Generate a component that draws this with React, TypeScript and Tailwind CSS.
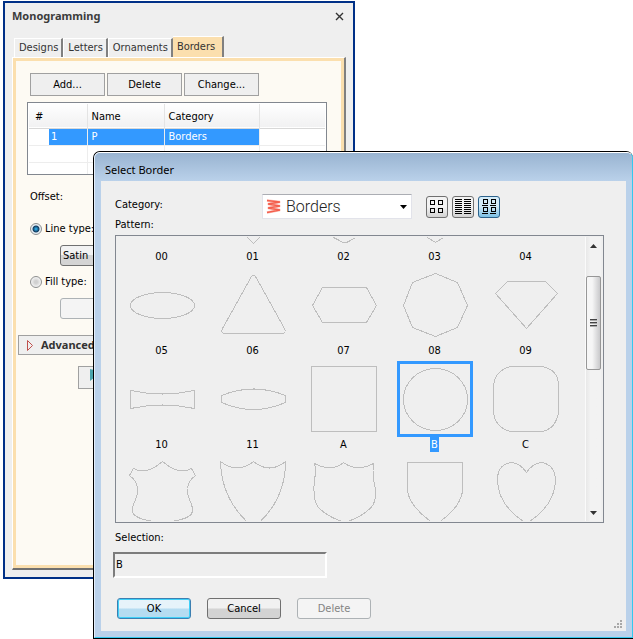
import { useState } from 'react'

type Pattern = { name: string; path: string; label?: string }

const PATTERNS: Pattern[] = [
  { name: '00', label: '00', path: '' },
  { name: '01', label: '01', path: 'M38 8 L68 39 L38 70 L8 39 Z' },
  { name: '02', label: '02', path: 'M27 64 L33 67 L36 69 L40 69 L44 67 L49 64' },
  { name: '03', label: '03', path: 'M30 64 L38 69 L46 64' },
  { name: '04', label: '04', path: '' },
  { name: '05', label: '05', path: 'M6 38 A32 13 0 1 1 70 38 A32 13 0 1 1 6 38 Z' },
  { name: '06', label: '06', path: 'M36 9 Q38 7 40 9 L69 61 Q71 66 66 66 L10 66 Q5 66 7 61 Z' },
  { name: '07', label: '07', path: 'M6 38 L16 20 L60 20 L70 38 L60 55 L16 55 Z' },
  { name: '08', label: '08', path: 'M38 6 L60 15 L70 38 L60 60 L38 69 L15 60 L6 38 L15 15 Z' },
  { name: '09', label: '09', path: 'M19 14 L57 14 L69 26 L38 61 L7 26 Z' },
  { name: '10', label: '10', path: 'M6 29 Q38 36 70 29 L70 47 Q38 40 6 47 Z' },
  { name: '11', label: '11', path: 'M6 34 Q38 21 70 34 L70 41 Q38 55 6 41 Z' },
  { name: 'A', label: 'A', path: 'M5 5 H70 V70 H5 Z' },
  { name: 'B', label: 'B', path: 'M6 38 A32 31 0 1 1 70 38 A32 31 0 1 1 6 38 Z' },
  { name: 'C', label: 'C', path: 'M23 5 H53 Q70 8 70 24 V51 Q67 68 53 70 H23 Q7 67 5 51 V24 Q7 8 23 5 Z' },
  {
    name: 'Hide',
    path: 'M38 6 Q27 15 21 15 Q14 16 9 13 L5 20 Q12 25 13 33 Q14 38 9 49 Q6 58 12 61 Q18 65 38 67 Q58 65 64 61 Q70 58 67 49 Q62 38 63 33 Q64 25 71 20 L67 13 Q62 16 55 15 Q49 15 38 6 Z',
  },
  { name: 'Pointed shield', path: 'M5 6 Q22 19 38 6 Q54 19 70 6 Q70 46 38 72 Q6 46 5 6 Z' },
  {
    name: 'Round shield',
    path: 'M8 8 Q25 17 37 7 Q50 17 67 8 Q66 15 67 24 Q73 48 61 55 Q54 62 38 67 Q20 61 11 51 Q6 42 8 24 Q10 15 8 8 Z',
  },
  { name: 'Flat shield', path: 'M10 7 H65 V36 Q62 54 38 69 Q14 54 10 36 Z' },
  { name: 'Heart', path: 'M38 17 Q32 8 23 7 Q9 9 9 24 Q9 50 38 68 Q67 50 67 24 Q66 9 53 7 Q44 8 38 17 Z' },
]

const TABS = ['Designs', 'Letters', 'Ornaments', 'Borders']

function FlatButton({ children }: { children: string }) {
  return (
    <button type="button" className="h-[23px] w-[75px] border border-[#a0a0a0] bg-[#efefef] pt-[2px] text-center">
      {children}
    </button>
  )
}

function Radio({ id, label, checked, onChange }: { id: string; label: string; checked: boolean; onChange: () => void }) {
  return (
    <div className="ml-[14px] flex h-4 items-center gap-[3px]">
      <input
        id={id}
        type="radio"
        name="border-type"
        checked={checked}
        onChange={onChange}
        className="h-3 w-3 appearance-none rounded-full border border-[#8e8f8f] bg-[radial-gradient(circle,#d0d0d0_20%,#f4f4f4_70%)] checked:bg-[radial-gradient(circle,#2a9fd8_10%,#123a5e_42%,#e6eef4_56%)]"
      />
      <label htmlFor={id}>{label}</label>
    </div>
  )
}

function MonogrammingWindow() {
  const [tab, setTab] = useState('Borders')
  const [kind, setKind] = useState('line')

  return (
    <section className="ml-[3px] w-full max-w-[352px] border-2 border-[#003087] bg-[#efefef] pr-[7px] pb-[7px] pl-[7px]">
      <header className="flex h-[33px] items-center justify-between pr-[2px] pb-[7px]">
        <h1 className="font-['Noto_Sans',sans-serif] text-[11px] font-bold text-[#3c3c3c]">Monogramming</h1>
        <button type="button" aria-label="Close">
          <svg width="9" height="9" viewBox="0 0 9 9" stroke="#333" strokeWidth="1.4">
            <path d="M1 1 L8 8 M8 1 L1 8" />
          </svg>
        </button>
      </header>

      <nav className="flex items-end pl-[2px] text-[#333]">
        {TABS.map((name) => (
          <button
            key={name}
            type="button"
            onClick={() => setTab(name)}
            className={
              tab === name
                ? 'h-[21px] border-t border-r-2 border-t-white border-r-[#808080] bg-[#fbdfae] pr-[7px] pl-1'
                : 'h-[19px] border-t border-r-2 border-l border-t-white border-r-[#808080] border-l-white pr-[3px] pl-1'
            }
          >
            {name}
          </button>
        ))}
      </nav>

      <div className="border-t border-r-2 border-b-2 border-l border-t-white border-r-[#808080] border-b-[#707070] border-l-white">
        <div className="border-[3px] border-[#fbdfae] bg-[#fdfaf3] pt-3 pb-44">
          <div className="ml-[14px] flex gap-[2px]">
            <FlatButton>Add...</FlatButton>
            <FlatButton>Delete</FlatButton>
            <FlatButton>Change...</FlatButton>
          </div>

          <div className="mt-[6px] mr-[14px] ml-[11px] h-[73px] overflow-hidden border border-[#82878f] bg-white px-px pt-px">
            <table className="w-full table-fixed border-collapse text-left">
              <thead>
                <tr className="h-6 border-b border-[#d8d8d8] bg-linear-to-b from-white to-[#f1f1f2]">
                  <th className="w-[58px] border-r border-[#e4e4e4] pt-[2px] pl-[6px] font-normal">#</th>
                  <th className="w-[77px] border-r border-[#e4e4e4] pt-[2px] pl-1 font-normal">Name</th>
                  <th className="w-[95px] border-r border-[#e4e4e4] pt-[2px] pl-1 font-normal">Category</th>
                  <th />
                </tr>
              </thead>
              <tbody>
                <tr className="h-[17px] border-b border-[#ededed] text-white">
                  <td className="border-r border-[#ededed] pl-5">
                    <span className="block h-4 bg-[#3399ff] pl-[2px] leading-4">1</span>
                  </td>
                  <td className="border-r border-[#ededed] bg-[#3399ff] pl-1">P</td>
                  <td className="border-r border-[#ededed] bg-[#3399ff] pl-1">Borders</td>
                  <td />
                </tr>
                <tr className="h-[17px] border-b border-[#ededed]">
                  <td className="border-r border-[#ededed]" />
                  <td className="border-r border-[#ededed]" />
                  <td className="border-r border-[#ededed]" />
                  <td />
                </tr>
                <tr className="h-[17px]">
                  <td className="border-r border-[#ededed]" />
                  <td className="border-r border-[#ededed]" />
                  <td className="border-r border-[#ededed]" />
                  <td />
                </tr>
              </tbody>
            </table>
          </div>

          <p className="mt-[14px] ml-[14px] leading-4">Offset:</p>

          <div className="mt-4">
            <Radio id="line-type" label="Line type:" checked={kind === 'line'} onChange={() => setKind('line')} />
          </div>
          <button
            type="button"
            className="mt-2 ml-11 block h-[21px] w-[120px] rounded-[3px] border border-[#707070] bg-linear-to-b from-[#f2f2f2] from-50% to-[#d4d4d4] to-50% pt-px pl-[2px] text-left"
          >
            Satin
          </button>
          <div className="mt-2">
            <Radio id="fill-type" label="Fill type:" checked={kind === 'fill'} onChange={() => setKind('fill')} />
          </div>
          <button
            type="button"
            disabled
            aria-label="Fill"
            className="mt-2 ml-11 block h-[21px] w-[120px] rounded-[3px] border border-[#adb2b5] bg-[#f4f4f4]"
          />

          <button
            type="button"
            className="mt-4 ml-[2px] flex h-5 w-[300px] items-center gap-2 border border-[#a0a0a0] bg-[#efefef] pl-2 font-['Noto_Sans',sans-serif] text-[11px] font-bold text-[#333]"
          >
            <svg width="6" height="11" viewBox="0 0 6 11" fill="none" stroke="#c0504d">
              <path d="M0.5 0.5 L5.5 5.5 L0.5 10.5 Z" />
            </svg>
            Advanced
          </button>
          <button
            type="button"
            aria-label="Apply"
            className="mt-[11px] ml-[62px] flex h-[23px] w-[120px] border border-[#a0a0a0] bg-[#efefef] pt-[2px] pl-[11px]"
          >
            <svg width="12" height="12" viewBox="0 0 12 12" fill="#4aa5ad">
              <path d="M0 0 L12 3 L5 8 L0 12 Z" />
            </svg>
          </button>
        </div>
      </div>
    </section>
  )
}

function ViewIcon({ kind }: { kind: string }) {
  if (kind === 'list') {
    return (
      <svg width="16" height="16" viewBox="0 0 16 16" stroke="#000" shapeRendering="crispEdges">
        {[0, 1, 2, 3, 4, 5, 6, 7].map((i) => (
          <path key={i} d={`M0 ${i * 2 + 0.5} H7 M9 ${i * 2 + 0.5} H16`} />
        ))}
      </svg>
    )
  }
  return (
    <svg width="14" height="16" viewBox="0 0 14 16" fill="none" stroke="#000" shapeRendering="crispEdges">
      {kind === 'icons' ? (
        <path d="M0.5 1.5 h4 v4 h-4 Z M8.5 1.5 h4 v4 h-4 Z M0.5 9.5 h4 v4 h-4 Z M8.5 9.5 h4 v4 h-4 Z" />
      ) : (
        <path d="M1.5 0.5 h4 v4 h-4 Z M9.5 0.5 h4 v4 h-4 Z M1.5 8.5 h4 v4 h-4 Z M9.5 8.5 h4 v4 h-4 Z M0 6.5 H6 M8 6.5 H14 M0 14.5 H6 M8 14.5 H14" />
      )}
    </svg>
  )
}

function PatternList({ selected, onSelect }: { selected: string; onSelect: (name: string) => void }) {
  return (
    <div className="mr-[22px] flex h-72 border border-[#828790] py-px pr-[2px]">
      <div className="min-w-0 flex-1 overflow-hidden pr-[14px]">
        {/* scrolled down most of one row */}
        <div className="-mt-16 grid grid-cols-5">
          {PATTERNS.map((p) => {
            const active = p.name === selected
            return (
              <button
                key={p.name}
                type="button"
                aria-label={p.name}
                onClick={() => onSelect(p.name)}
                className="flex h-[94px] flex-col items-center"
              >
                <span className={active ? 'outline-3 -outline-offset-3 outline-[#3399ff]' : ''}>
                  <svg width="76" height="76" viewBox="0 0 76 76" fill="none" stroke="#bebebe" shapeRendering="crispEdges">
                    <path d={p.path} transform="translate(0.5 0.5)" />
                  </svg>
                </span>
                {p.label && (
                  <span className={active ? 'bg-[#3399ff] px-[1px] leading-[15px] text-white' : 'leading-[15px]'}>{p.label}</span>
                )}
              </button>
            )
          })}
        </div>
      </div>
      <div className="flex w-4 flex-col items-center border-l border-[#fafafa] bg-linear-to-r from-[#e8e8e8] to-[#f2f2f2] to-30%">
        <button type="button" aria-label="Scroll up" className="flex h-[17px] w-full items-center justify-center">
          <svg width="7" height="4" viewBox="0 0 7 4" fill="#333">
            <path d="M3.5 0 L7 4 H0 Z" />
          </svg>
        </button>
        <div className="mt-[22px] flex h-[94px] w-[15px] flex-col items-center justify-center gap-px rounded-[2px] border border-[#979797] bg-linear-to-r from-[#f6f6f6] from-40% to-[#c9c9cb]">
          <span className="h-[2px] w-[7px] border-t border-[#444] bg-[#aaa]" />
          <span className="h-[2px] w-[7px] border-t border-[#444] bg-[#aaa]" />
          <span className="h-[2px] w-[7px] border-t border-[#444] bg-[#aaa]" />
        </div>
        <div className="flex-1" />
        <button type="button" aria-label="Scroll down" className="flex h-[17px] w-full items-center justify-center">
          <svg width="7" height="4" viewBox="0 0 7 4" fill="#333">
            <path d="M0 0 H7 L3.5 4 Z" />
          </svg>
        </button>
      </div>
    </div>
  )
}

function SelectBorderDialog() {
  const [selected, setSelected] = useState('B')
  const [view, setView] = useState('labels')

  return (
    <section
      role="dialog"
      aria-labelledby="dialog-title"
      className="absolute top-[151px] right-0 left-[93px] rounded-t-[7px] border-t border-b border-l border-black bg-[#bad1ea]"
    >
      <div className="rounded-t-[6px] border border-t-white border-r-[#34c8ee] border-b-[#34c8ee] border-l-[#e4eefa] px-[6px] pb-[6px]">
        <header className="-mx-[6px] flex h-7 items-center rounded-t-[5px] bg-linear-to-b from-[#99b4d1] to-[#bad1ea] pt-[6px] pl-[10px]">
          <h2 id="dialog-title" className="font-['Noto_Sans',sans-serif] text-[11px]">
            Select Border
          </h2>
        </header>

        <div className="relative bg-[#efefef] pt-[13px] pb-3 pl-[14px]">
          <div className="flex h-[25px] items-center">
            <label htmlFor="category" className="w-[147px] self-start leading-[22px]">
              Category:
            </label>
            <div className="relative w-[150px]">
              <select
                id="category"
                defaultValue="Borders"
                className="block h-[25px] w-full appearance-none border border-[#e2e3ea] border-t-[#abadb3] bg-white pl-[23px] font-['Roboto',sans-serif] text-base leading-5 font-light text-[#222]"
              >
                <option>Borders</option>
              </select>
              <svg className="pointer-events-none absolute top-[5px] left-[4px]" width="15" height="15" viewBox="0 0 15 15" fill="none">
                <path d="M1 1.5 L14 3 L2 5 L14 7 L2 9 L14 11 L1 13.5" stroke="#fbc4bc" strokeWidth="2.5" />
                <path d="M1 1.5 L14 3 L2 5 L14 7 L2 9 L14 11 L1 13.5" stroke="#f4604e" strokeWidth="1.5" />
              </svg>
              <svg className="pointer-events-none absolute top-[11px] right-[5px]" width="7" height="4" viewBox="0 0 7 4">
                <path d="M0 0 H7 L3.5 4 Z" />
              </svg>
            </div>
            <div className="ml-[14px] flex gap-1">
              {['icons', 'list', 'labels'].map((v) => (
                <button
                  key={v}
                  type="button"
                  aria-label={v}
                  onClick={() => setView(v)}
                  className={
                    view === v
                      ? 'flex h-[22px] w-[22px] items-center justify-center rounded-[3px] border border-[#2c628b] bg-linear-to-b from-[#d4ecf9] from-45% to-[#7cc0e4]'
                      : 'flex h-[22px] w-[22px] items-center justify-center rounded-[3px] border border-[#707070] bg-linear-to-b from-[#f3f3f3] from-50% to-[#d2d2d2]'
                  }
                >
                  <ViewIcon kind={v} />
                </button>
              ))}
            </div>
          </div>

          <p className="mb-1 leading-3">Pattern:</p>
          <PatternList selected={selected} onSelect={setSelected} />

          <label htmlFor="selection" className="mt-2 block leading-[14px]">
            Selection:
          </label>
          <input
            id="selection"
            readOnly
            value={selected}
            className="mt-[7px] -ml-[2px] block h-[26px] w-[214px] border-2 border-t-[#7c7c7c] border-r-white border-b-white border-l-[#7c7c7c] bg-[#efefef] pb-[2px] pl-px"
          />

          <div className="mt-5 ml-[2px] flex gap-4">
            <button
              type="button"
              className="h-[21px] w-[74px] rounded-[3px] border border-[#3c7fb1] bg-linear-to-b from-[#e6f3fa] from-45% to-[#b5dcf1] to-55% pt-px ring-1 ring-[#3fd0f8] ring-inset"
            >
              OK
            </button>
            <button
              type="button"
              className="h-[21px] w-[74px] rounded-[3px] border border-[#707070] bg-linear-to-b from-[#f1f1f1] from-45% to-[#d3d3d3] to-55% pt-px"
            >
              Cancel
            </button>
            <button type="button" disabled className="h-[21px] w-[74px] rounded-[3px] border border-[#adb2b5] bg-[#f4f4f4] pt-px text-[#838383]">
              Delete
            </button>
          </div>

          <svg className="absolute right-1 bottom-[3px]" width="8" height="8" viewBox="0 0 8 8" fill="#a8a8a8">
            <path d="M6 0 h2 v2 h-2 Z M3 3 h2 v2 h-2 Z M6 3 h2 v2 h-2 Z M0 6 h2 v2 h-2 Z M3 6 h2 v2 h-2 Z M6 6 h2 v2 h-2 Z" />
          </svg>
        </div>
      </div>
    </section>
  )
}

export default function App() {
  return (
    <main className="relative min-h-screen bg-white pt-px font-['DejaVu_Sans_Condensed','DejaVu_Sans',sans-serif] text-[11px] text-black">
      <MonogrammingWindow />
      <SelectBorderDialog />
    </main>
  )
}
